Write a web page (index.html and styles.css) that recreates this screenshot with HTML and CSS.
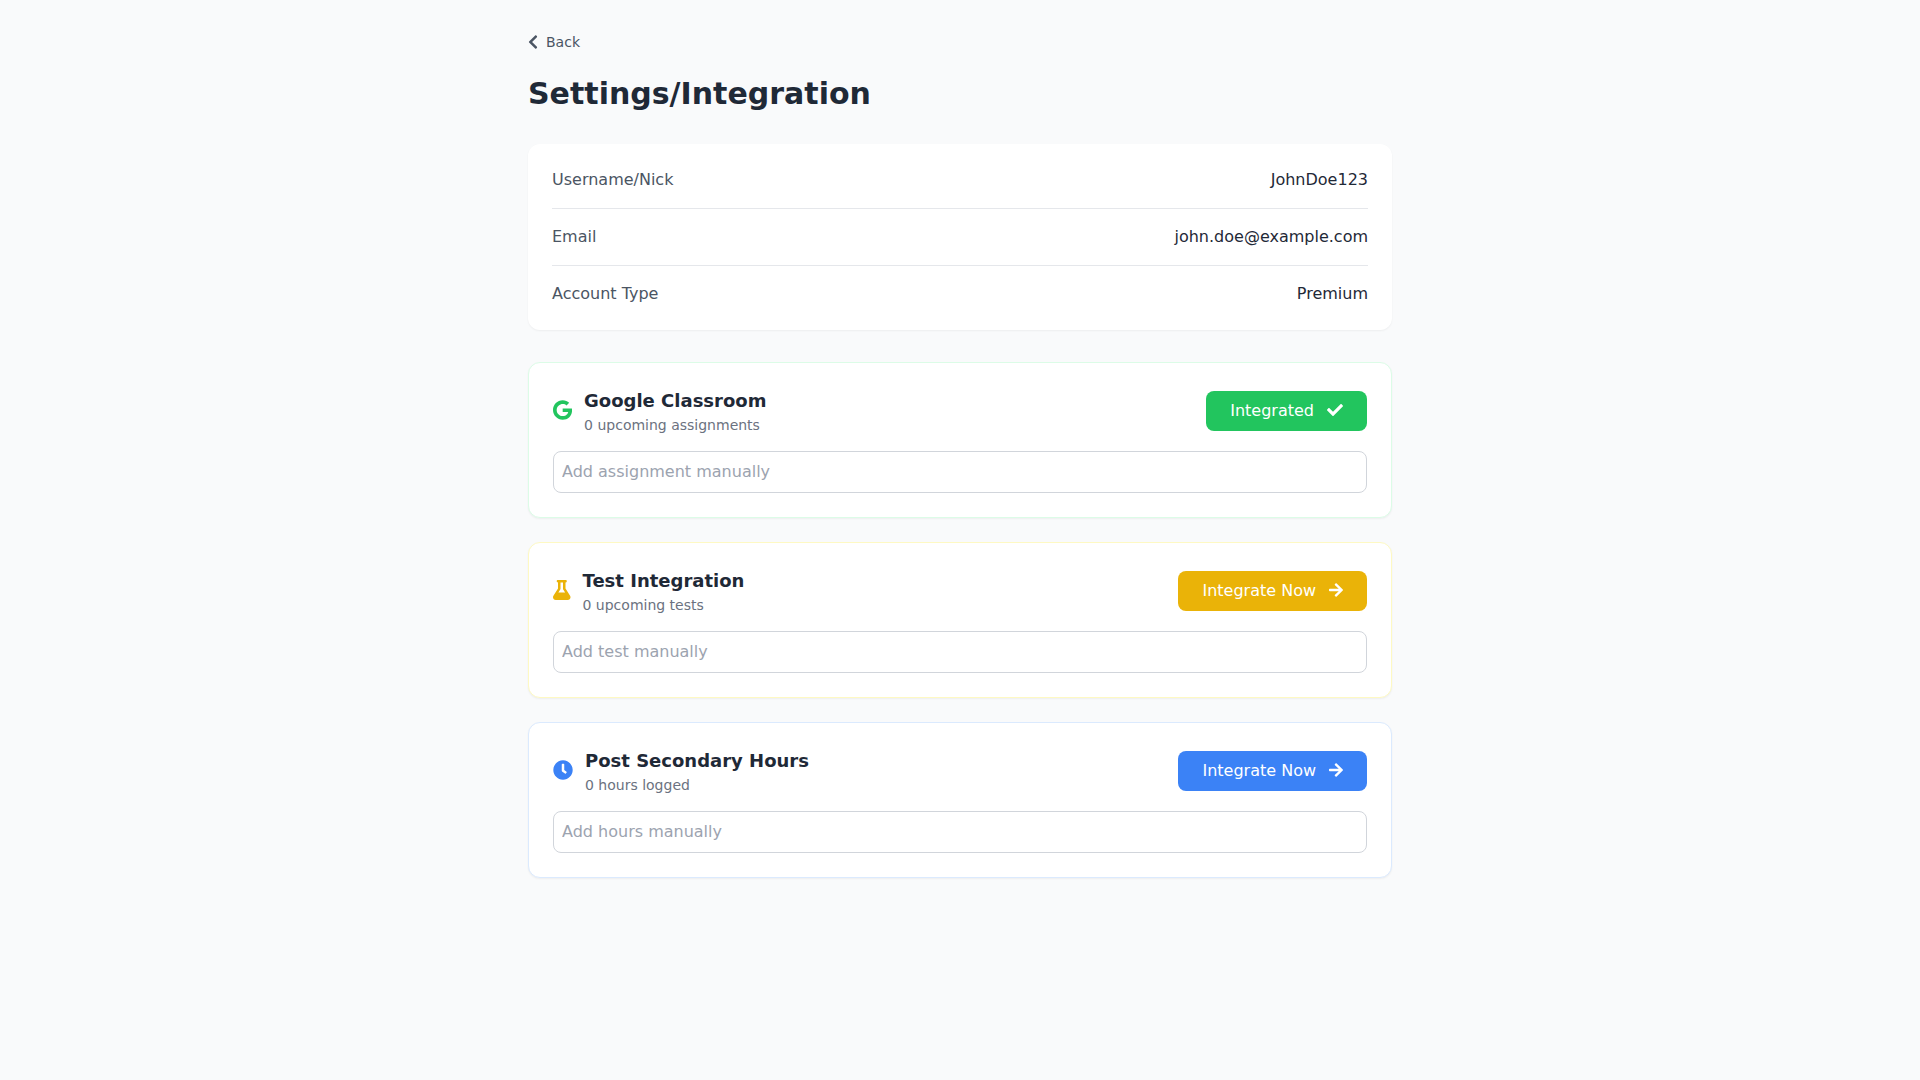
FILE: index.html
```html
<!DOCTYPE html>
<html lang="en">
<head>
    <meta charset="UTF-8">
    <meta name="viewport" content="width=device-width, initial-scale=1.0">
    <title>Settings/Integration</title>
    <link rel="stylesheet" href="styles.css">
</head>
<body>
    <div class="page">
        <a href="#" class="back-link">
            <svg class="icon back-icon" viewBox="0 0 320 512"><path d="M34.52 239.03L228.87 44.69c9.37-9.37 24.57-9.37 33.94 0l22.67 22.67c9.36 9.36 9.37 24.52.04 33.9L131.49 256l154.02 154.75c9.34 9.38 9.32 24.54-.04 33.9l-22.67 22.67c-9.37 9.37-24.57 9.37-33.94 0L34.52 272.97c-9.37-9.37-9.37-24.57 0-33.94z"/></svg>
            Back
        </a>
        <h1>Settings/Integration</h1>

        <div class="account-card">
            <div class="account-row">
                <span class="account-label">Username/Nick</span>
                <span class="account-value">JohnDoe123</span>
            </div>
            <div class="account-row">
                <span class="account-label">Email</span>
                <span class="account-value">john.doe@example.com</span>
            </div>
            <div class="account-row">
                <span class="account-label">Account Type</span>
                <span class="account-value">Premium</span>
            </div>
        </div>

        <div class="integration-list">
            <div class="integration-card green">
                <div class="integration-header">
                    <div class="integration-info">
                        <svg class="icon service-icon" viewBox="0 0 488 512"><path d="M488 261.8C488 403.3 391.1 504 248 504 110.8 504 0 393.2 0 256S110.8 8 248 8c66.8 0 123 24.5 166.3 64.9l-67.5 64.9C258.5 52.6 94.3 116.6 94.3 256c0 86.5 69.1 156.6 153.7 156.6 98.2 0 135-70.4 140.8-106.9H248v-85.3h236.1c2.3 12.7 3.9 24.9 3.9 41.4z"/></svg>
                        <div>
                            <h3>Google Classroom</h3>
                            <p>0 upcoming assignments</p>
                        </div>
                    </div>
                    <button type="button" class="integrate-button">
                        Integrated
                        <svg class="icon button-icon" viewBox="0 0 512 512"><path d="M173.898 439.404l-166.4-166.4c-9.997-9.997-9.997-26.206 0-36.204l36.203-36.204c9.997-9.998 26.207-9.998 36.204 0L192 312.69 432.095 72.596c9.997-9.997 26.207-9.997 36.204 0l36.203 36.204c9.997 9.997 9.997 26.206 0 36.204l-294.4 294.401c-9.998 9.997-26.207 9.997-36.204-.001z"/></svg>
                    </button>
                </div>
                <input type="text" class="manual-input" placeholder="Add assignment manually">
            </div>

            <div class="integration-card yellow">
                <div class="integration-header">
                    <div class="integration-info">
                        <svg class="icon service-icon" viewBox="0 0 448 512"><path d="M437.2 403.5L320 215V64h8c13.3 0 24-10.7 24-24V24c0-13.3-10.7-24-24-24H120c-13.3 0-24 10.7-24 24v16c0 13.3 10.7 24 24 24h8v151L10.8 403.5C-18.5 450.6 15.3 512 70.9 512h306.2c55.7 0 89.4-61.5 60.1-108.5zM137.9 320l48.2-77.6c3.7-5.2 5.8-11.6 5.8-18.4V64h64v160c0 6.9 2.2 13.2 5.8 18.4l48.2 77.6h-172z"/></svg>
                        <div>
                            <h3>Test Integration</h3>
                            <p>0 upcoming tests</p>
                        </div>
                    </div>
                    <button type="button" class="integrate-button">
                        Integrate Now
                        <svg class="icon button-icon" viewBox="0 0 448 512"><path d="M190.5 66.9l22.2-22.2c9.4-9.4 24.6-9.4 33.9 0L441 239c9.4 9.4 9.4 24.6 0 33.9L246.6 467.3c-9.4 9.4-24.6 9.4-33.9 0l-22.2-22.2c-9.5-9.5-9.3-25 .4-34.3L311.4 296H24c-13.3 0-24-10.7-24-24v-32c0-13.3 10.7-24 24-24h287.4L190.9 101.2c-9.8-9.3-10-24.8-.4-34.3z"/></svg>
                    </button>
                </div>
                <input type="text" class="manual-input" placeholder="Add test manually">
            </div>

            <div class="integration-card blue">
                <div class="integration-header">
                    <div class="integration-info">
                        <svg class="icon service-icon" viewBox="0 0 512 512"><path d="M256 8C119 8 8 119 8 256s111 248 248 248 248-111 248-248S393 8 256 8zm92.49 313l-20 25a16 16 0 0 1-22.49 2.5l-67-49.72a40 40 0 0 1-15-31.23V112a16 16 0 0 1 16-16h32a16 16 0 0 1 16 16v144l58 42.5a16 16 0 0 1 2.49 22.5z"/></svg>
                        <div>
                            <h3>Post Secondary Hours</h3>
                            <p>0 hours logged</p>
                        </div>
                    </div>
                    <button type="button" class="integrate-button">
                        Integrate Now
                        <svg class="icon button-icon" viewBox="0 0 448 512"><path d="M190.5 66.9l22.2-22.2c9.4-9.4 24.6-9.4 33.9 0L441 239c9.4 9.4 9.4 24.6 0 33.9L246.6 467.3c-9.4 9.4-24.6 9.4-33.9 0l-22.2-22.2c-9.5-9.5-9.3-25 .4-34.3L311.4 296H24c-13.3 0-24-10.7-24-24v-32c0-13.3 10.7-24 24-24h287.4L190.9 101.2c-9.8-9.3-10-24.8-.4-34.3z"/></svg>
                    </button>
                </div>
                <input type="text" class="manual-input" placeholder="Add hours manually">
            </div>
        </div>
    </div>
</body>
</html>
```

FILE: styles.css
```css
* {
    box-sizing: border-box;
}

body {
    font-family: "DejaVu Sans", sans-serif;
    margin: 0;
    background-color: #F9FAFB;
    color: #1F2937;
    line-height: 1.5;
    min-height: 100vh;
}

.page {
    width: 864px;
    margin: 0 auto;
    padding: 32px 0;
}

.icon {
    display: block;
    fill: currentColor;
    height: 1em;
    flex-shrink: 0;
}

.back-link {
    display: flex;
    align-items: center;
    color: #4B5563;
    font-size: 14px;
    line-height: 20px;
    text-decoration: none;
    margin-bottom: 24px;
}
.back-icon {
    font-size: 16px;
    margin-right: 8px;
}

h1 {
    font-size: 30px;
    line-height: 36px;
    font-weight: 700;
    color: #1F2937;
    margin: 0 0 32px;
}

.account-card {
    background-color: white;
    border-radius: 12px;
    box-shadow: 0 1px 2px 0 rgba(0, 0, 0, 0.05);
    padding: 8px 24px;
    margin-bottom: 32px;
}

.account-row {
    display: flex;
    justify-content: space-between;
    align-items: center;
    padding: 16px 0;
    border-bottom: 1px solid #E5E7EB;
}
.account-row:last-child {
    border-bottom: none;
}
.account-label {
    color: #4B5563;
}
.account-value {
    color: #1F2937;
}

.integration-list {
    display: flex;
    flex-direction: column;
    gap: 24px;
}

.integration-card {
    background-color: white;
    border: 1px solid;
    border-radius: 12px;
    box-shadow: 0 1px 2px 0 rgba(0, 0, 0, 0.05);
    padding: 24px;
}
.integration-card.green {
    border-color: #DCFCE7;
}
.integration-card.yellow {
    border-color: #FEF9C3;
}
.integration-card.blue {
    border-color: #DBEAFE;
}

.integration-header {
    display: flex;
    justify-content: space-between;
    align-items: center;
    margin-bottom: 16px;
}
.integration-info {
    display: flex;
    align-items: center;
}
.integration-info h3 {
    font-size: 18px;
    line-height: 28px;
    font-weight: 700;
    color: #1F2937;
    margin: 0;
}
.integration-info p {
    font-size: 14px;
    line-height: 20px;
    color: #6B7280;
    margin: 0;
}

.service-icon {
    font-size: 20px;
    margin-right: 12px;
    margin-bottom: 2px;
}
.green .service-icon {
    color: #22C55E;
}
.yellow .service-icon {
    color: #EAB308;
}
.blue .service-icon {
    color: #3B82F6;
}

.integrate-button {
    display: flex;
    align-items: center;
    height: 40px;
    padding: 0 24px;
    border: none;
    border-radius: 8px;
    color: white;
    font-family: inherit;
    font-size: 16px;
    line-height: 24px;
    cursor: pointer;
}
.green .integrate-button {
    background-color: #22C55E;
}
.yellow .integrate-button {
    background-color: #EAB308;
}
.blue .integrate-button {
    background-color: #3B82F6;
}
.button-icon {
    margin-left: 13px;
    margin-bottom: 2px;
}

.manual-input {
    display: block;
    width: 100%;
    height: 42px;
    padding: 7px 8px 9px;
    border: 1px solid #D1D5DB;
    border-radius: 8px;
    background-color: white;
    color: #1F2937;
    font-family: inherit;
    font-size: 16px;
    line-height: 24px;
    outline: none;
}
.manual-input::placeholder {
    color: #9CA3AF;
}
```
